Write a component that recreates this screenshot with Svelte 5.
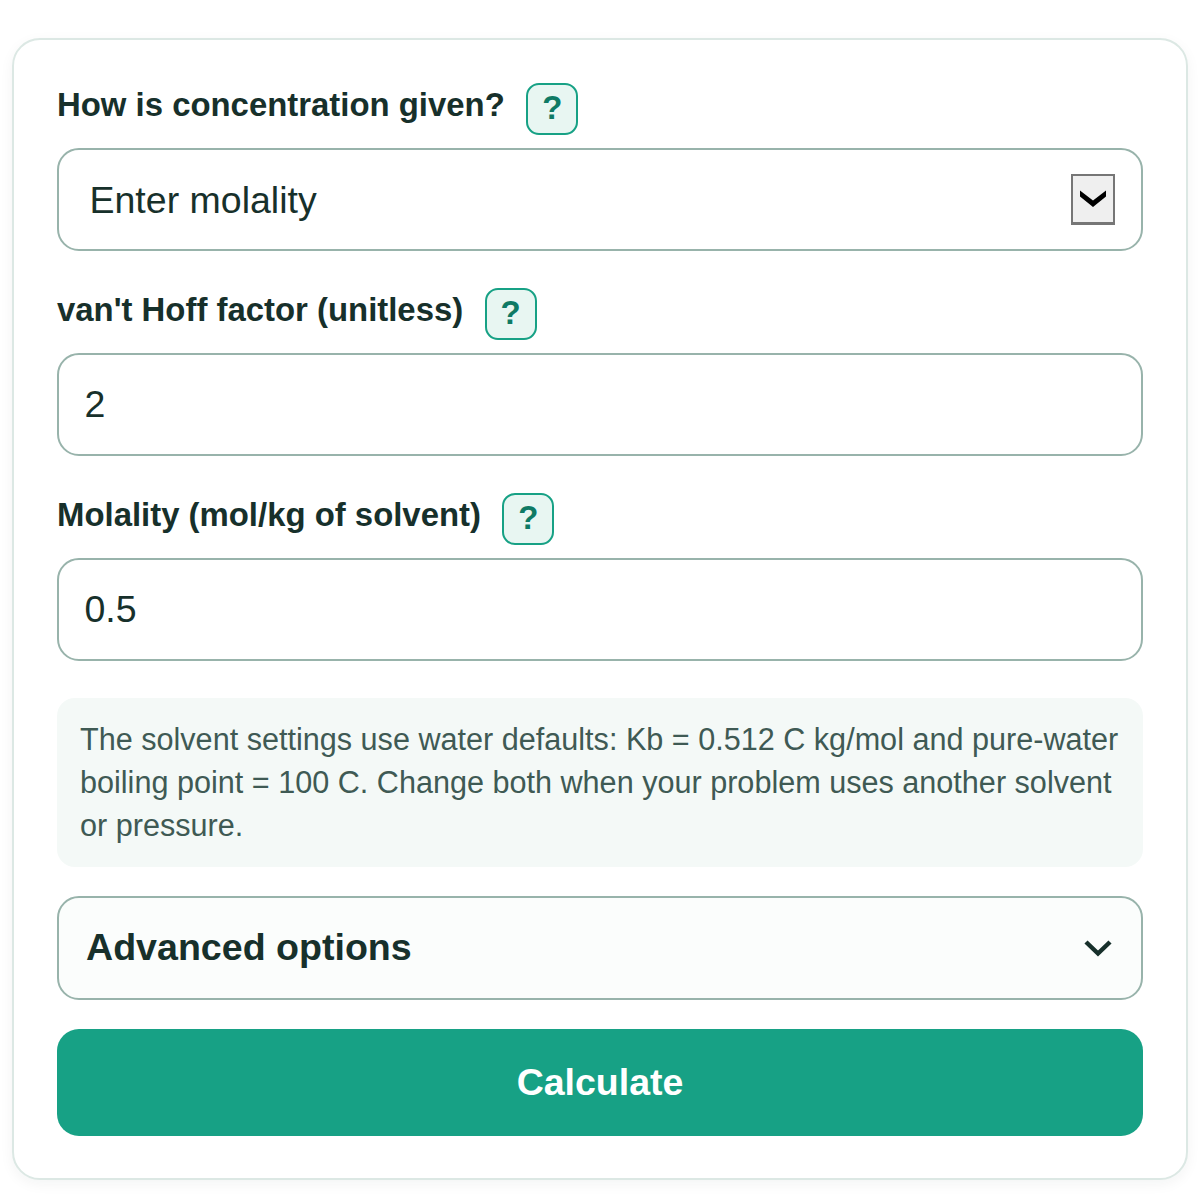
<script lang="ts">
    const fields = [
        { label: "van't Hoff factor (unitless)", value: '2' },
        { label: 'Molality (mol/kg of solvent)', value: '0.5' }
    ];
</script>

<main>
    <form class="card" onsubmit={(e) => e.preventDefault()}>
        <div class="field">
            <div class="label-row">
                <label for="mode">How is concentration given?</label>
                <button type="button" class="help">?</button>
            </div>
            <div class="select-wrap">
                <select id="mode">
                    <option>Enter molality</option>
                </select>
                <span class="arrow-box">
                    <svg viewBox="0 0 26 19" width="26" height="19">
                        <polygon points="0,1.5 13,11.5 26,1.5 26,7.5 13,18 0,7.5" fill="#000" />
                    </svg>
                </span>
            </div>
        </div>

        {#each fields as f}
            <div class="field">
                <div class="label-row">
                    <label for={f.label}>{f.label}</label>
                    <button type="button" class="help">?</button>
                </div>
                <input id={f.label} type="text" value={f.value} />
            </div>
        {/each}

        <p class="note">
            The solvent settings use water defaults: Kb = 0.512 C kg/mol and pure-water boiling point = 100 C. Change both when your problem uses another solvent or pressure.
        </p>

        <div class="advanced">
            <span>Advanced options</span>
            <svg viewBox="0 0 28 18" width="28" height="18">
                <path d="M2 3 L14 14.5 L26 3" fill="none" stroke="#17302b" stroke-width="4.5" />
            </svg>
        </div>

        <button type="submit" class="calc">Calculate</button>
    </form>
</main>

<style>
    :global(body) {
        background: #fff;
    }

    main {
        padding: 37.5px 12px 20px;
        font-family: "Liberation Sans", Arial, sans-serif;
        color: #17302b;
    }

    .card {
        display: flex;
        flex-direction: column;
        padding: 43px 43px 41.5px;
        border: 2px solid #dce8e4;
        border-radius: 28px;
        background: #fff;
        box-shadow: 0 4px 14px rgba(23, 48, 43, 0.05);
    }

    .field {
        margin-bottom: 37px;
    }

    .label-row {
        display: flex;
        align-items: flex-start;
        gap: 21.5px;
        margin-bottom: 13.5px;
    }

    label {
        font-size: 32.9px;
        font-weight: 700;
        line-height: 44px;
    }

    .help {
        width: 52px;
        height: 52px;
        padding: 0 0 2px;
        border: 2px solid #17a185;
        border-radius: 13px;
        background: #e8f6f2;
        color: #0f7a65;
        font-family: inherit;
        font-size: 33px;
        font-weight: 700;
    }

    .select-wrap {
        position: relative;
    }

    select,
    input {
        display: block;
        box-sizing: border-box;
        width: 100%;
        height: 102.5px;
        border: 2px solid #98b3ab;
        border-radius: 22px;
        background: #fff;
        color: #17302b;
        font-family: inherit;
        font-size: 37.5px;
    }

    select {
        appearance: none;
        padding: 1px 30.5px 0;
    }

    input {
        padding: 0 25.5px;
    }

    .arrow-box {
        position: absolute;
        top: 26px;
        right: 28px;
        box-sizing: border-box;
        display: flex;
        align-items: center;
        justify-content: center;
        width: 44px;
        height: 51px;
        padding-bottom: 2px;
        border: 2px solid #767676;
        border-bottom-width: 3px;
        background: #efefef;
        pointer-events: none;
    }

    .note {
        margin: 0 0 29px;
        padding: 20px 23px 20px;
        border-radius: 18px;
        background: #f4f9f7;
        color: #3f5a54;
        font-size: 30.6px;
        line-height: 43.3px;
    }

    .advanced {
        display: flex;
        align-items: center;
        justify-content: space-between;
        box-sizing: border-box;
        height: 104px;
        margin-bottom: 29px;
        padding: 0 29px 1px;
        border: 2px solid #98b3ab;
        border-radius: 22px;
        background: #fbfdfc;
        font-size: 37.6px;
        font-weight: 700;
    }

    .advanced span {
        margin-left: -2px;
    }

    .calc {
        height: 107px;
        border: 0;
        border-radius: 22px;
        background: #17a185;
        color: #fff;
        font-family: inherit;
        font-size: 37.5px;
        font-weight: 700;
    }
</style>
